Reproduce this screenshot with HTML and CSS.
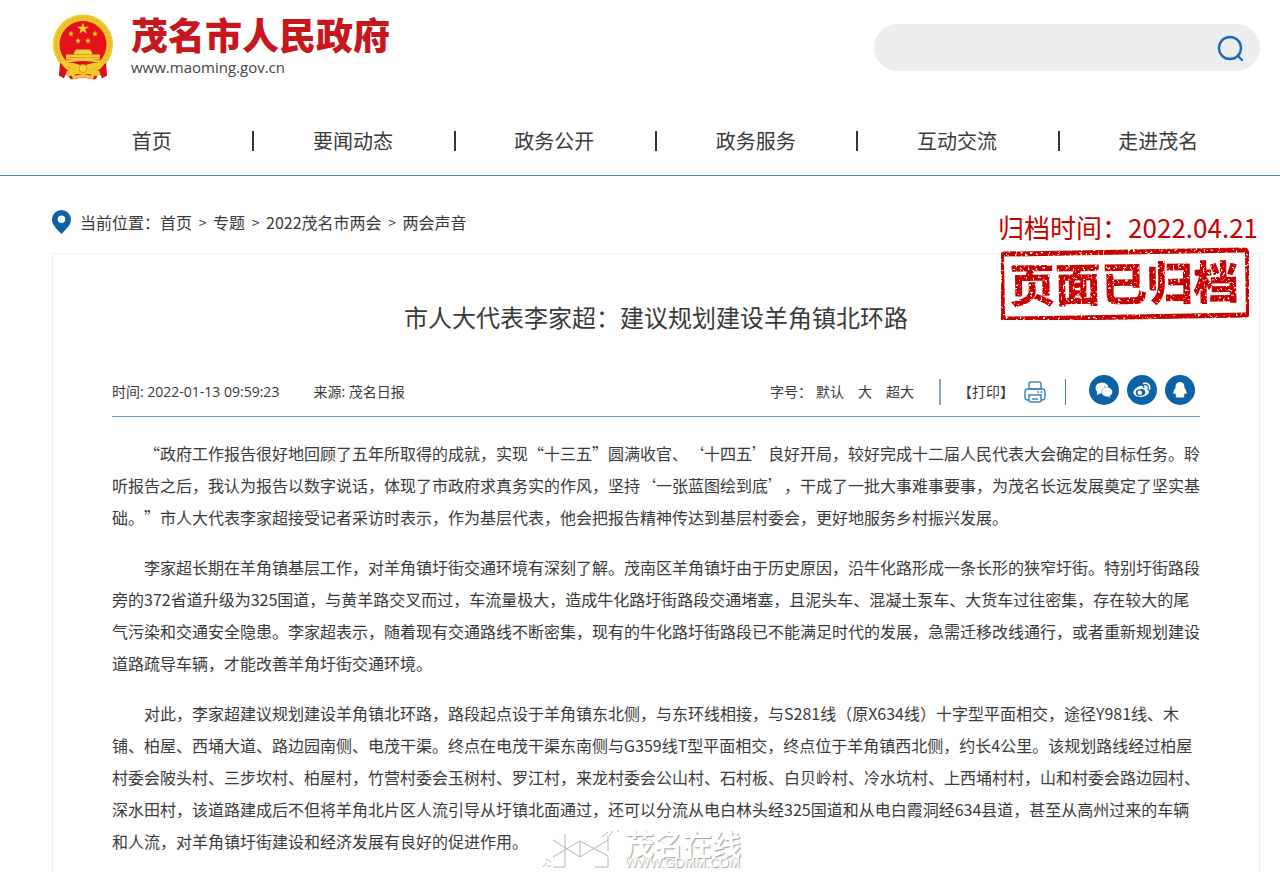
FILE: index.html
```html
<!DOCTYPE html>
<html lang="zh-CN">
<head>
    <meta charset="UTF-8">
    <meta name="viewport" content="width=device-width, initial-scale=1.0">
    <title>市人大代表李家超：建议规划建设羊角镇北环路</title>
    <link rel="stylesheet" href="styles.css">
</head>
<body>
    <header class="header">
        <a class="logo" href="#">
            <svg class="emblem" viewBox="0 0 62 66" aria-hidden="true">
                <path d="M11 46 L7 61 L15 60 L19 65 L31 63 L43 65 L47 60 L55 61 L51 46 Z" fill="#d3131b"/>
                <circle cx="31" cy="30" r="30" fill="#f3c62c"/>
                <circle cx="31" cy="30" r="27" fill="none" stroke="#e0a820" stroke-width="1" stroke-dasharray="3 2"/>
                <circle cx="31" cy="30" r="23.500" fill="#e4131b"/>
                <path d="M31 8 L32.4 12.3 L37 12.3 L33.3 15 L34.7 19.3 L31 16.6 L27.3 19.3 L28.7 15 L25 12.3 L29.6 12.3 Z" fill="#fbd12f"/>
                <g fill="#fbd12f">
                    <path id="star" d="M19 16 L19.8 18.2 L22 18.3 L20.2 19.7 L20.8 22 L19 20.7 L17.2 22 L17.8 19.7 L16 18.3 L18.2 18.2 Z"/>
                    <use href="#star" x="24"/>
                    <use href="#star" x="7" y="7"/>
                    <use href="#star" x="17" y="7"/>
                </g>
                <path d="M24 35 H38 L40 38 V40 H48 V45 H14 V40 H22 V38 Z" fill="#f8d238"/>
                <path d="M22 40 H40 M14 43 H48" stroke="#dba01f" stroke-width="1"/>
                <path d="M9 47 Q31 41 53 47 L50 52 Q41 51 36 54 L50 57 L46 62 L31 58 L16 62 L12 57 L26 54 Q21 51 12 52 Z" fill="#f5c92d"/>
                <path d="M15 48 Q31 45 47 48 Q38 48 31 52 Q24 48 15 48 Z" fill="#d3131b"/>
                <circle cx="31" cy="54" r="4" fill="#f8d238" stroke="#d99a1c"/>
                <path d="M8 48 L15 56 L12 64 L7 61 Z M54 48 L47 56 L50 64 L55 61 Z" fill="#d3131b"/>
                <path d="M20 58 L22 63 L31 61 L40 63 L42 58" fill="none" stroke="#f5c92d" stroke-width="3"/>
            </svg>
            <span class="logo-text">
                <strong class="site-name">茂名市人民政府</strong>
                <span class="site-url">www.maoming.gov.cn</span>
            </span>
        </a>
        <form class="search">
            <input type="text" aria-label="搜索">
            <button type="submit" aria-label="搜索">
                <svg width="28" height="28" viewBox="0 0 28 28" fill="none" stroke="#1a6cb0" stroke-width="2.400" stroke-linecap="round">
                    <circle cx="14" cy="14" r="11"/>
                    <path d="M22 22 L26 26"/>
                </svg>
            </button>
        </form>
    </header>

    <nav class="nav">
        <a href="#">首页</a>
        <a href="#">要闻动态</a>
        <a href="#">政务公开</a>
        <a href="#">政务服务</a>
        <a href="#">互动交流</a>
        <a href="#">走进茂名</a>
    </nav>

    <main class="main">
        <div class="crumbs">
            <svg class="pin" width="19" height="24" viewBox="0 0 19 24" aria-hidden="true">
                <path d="M9.500 0 A9.500 9.500 0 0 0 0 9.500 C0 15 5 19 9.500 24 C14 19 19 15 19 9.500 A9.500 9.500 0 0 0 9.500 0 Z M9.500 5.500 A3.700 3.700 0 1 1 9.500 13 A3.700 3.700 0 1 1 9.500 5.500 Z" fill="#0c62a6"/>
            </svg>
            <span>当前位置：</span>
            <a href="#">首页</a><span class="sep">&gt;</span>
            <a href="#">专题</a><span class="sep">&gt;</span>
            <a href="#">2022茂名市两会</a><span class="sep">&gt;</span>
            <a href="#">两会声音</a>
        </div>

        <!-- archive mark -->
        <div class="archive">
            <p>归档时间：2022.04.21</p>
            <svg class="stamp" width="254" height="76" viewBox="0 0 254 76" role="img" aria-label="页面已归档">
                <filter id="worn" x="0" y="0" width="100%" height="100%">
                    <feTurbulence type="fractalNoise" baseFrequency="0.4" numOctaves="2" seed="4"/>
                    <feColorMatrix values="0 0 0 0 0  0 0 0 0 0  0 0 0 0 0  0 0 0 -8 5.800"/>
                    <feComposite in="SourceGraphic" operator="in"/>
                </filter>
                <g filter="url(#worn)">
                    <g transform="rotate(-1 127 38)">
                        <rect x="4" y="5" width="246" height="65" rx="3" fill="none" stroke="#c70000" stroke-width="5"/>
                        <text class="stamp-text" x="126" y="54" text-anchor="middle">页面已归档</text>
                    </g>
                </g>
            </svg>
        </div>

        <article class="article">
            <h1>市人大代表李家超：建议规划建设羊角镇北环路</h1>

            <div class="meta">
                <span class="time">时间: 2022-01-13 09:59:23</span>
                <span class="source">来源: 茂名日报</span>
                <div class="sizes">
                    <span>字号：</span>
                    <button type="button">默认</button>
                    <button type="button">大</button>
                    <button type="button">超大</button>
                </div>
                <button type="button" class="print">【打印】
                    <svg width="22" height="22" viewBox="0 0 22 22" fill="none" stroke="#3f86bd" stroke-width="1.500" aria-hidden="true">
                        <path d="M5 8 V3 Q5 1 7 1 H15 Q17 1 17 3 V8 Z"/>
                        <path d="M5 19 H4 Q1 19 1 16 V11 Q1 8 4 8 H18 Q21 8 21 11 V16 Q21 19 18 19 H17"/>
                        <path d="M5 14 H17 V19 Q17 21 15 21 H7 Q5 21 5 19 Z"/>
                        <path d="M8 18 H14 M13 11 H15 M16.500 11 H18.500"/>
                    </svg>
                </button>
                <div class="share">
                    <a href="#" aria-label="微信">
                        <svg width="30" height="30" viewBox="0 0 30 30">
                            <ellipse cx="13" cy="13" rx="6.500" ry="5.500" fill="#fff"/>
                            <path d="M8 17 L8 20 L12 18 Z M20 20 L21.500 23 L17 21 Z" fill="#fff"/>
                            <ellipse cx="18" cy="17" rx="5.500" ry="4.700" fill="#fff" stroke="#0c62a6" stroke-width="0.400"/>
                            <path d="M10.500 11.500 h1 M15 11.500 h1 M15.700 16 h1 M19.500 16 h1" stroke="#6fa3cc" stroke-width="1"/>
                        </svg>
                    </a>
                    <a href="#" aria-label="微博">
                        <svg width="30" height="30" viewBox="0 0 30 30">
                            <path d="M13 11 C9 12 6 15.500 6.500 18 C7 21 11 22 14 22 C19 21.500 22 19 22 17 C22 15.500 21 15 20 14.500 C20.500 12.500 19 11.500 16 13 C16 11 15 10.500 13 11 Z" fill="#fff"/>
                            <ellipse cx="13.500" cy="17.500" rx="4.800" ry="3.300" fill="#0c62a6" transform="rotate(-10 13.500 17.500)"/>
                            <circle cx="12.800" cy="17.800" r="2.300" fill="#fff"/>
                            <path d="M16.500 8.500 C20.500 7.500 23.500 10 22.500 14 M17.500 11.200 C19.500 11 20.500 12 20 13.500" fill="none" stroke="#fff" stroke-width="1.600" stroke-linecap="round"/>
                        </svg>
                    </a>
                    <a href="#" aria-label="QQ">
                        <svg width="30" height="30" viewBox="0 0 30 30">
                            <path d="M15 7 C11.500 7 10.500 9.500 10.500 13 C8.500 15.500 8 17.500 8.500 19 C9 19.500 9.700 18.500 10 18 C10.300 19.300 10.800 20 11.500 20.700 C10 21.300 10.300 22.500 12 22.500 H18 C19.700 22.500 20 21.300 18.500 20.700 C19.200 20 19.700 19.300 20 18 C20.300 18.500 21 19.500 21.500 19 C22 17.500 21.500 15.500 19.500 13 C19.500 9.500 18.500 7 15 7 Z" fill="#fff"/>
                        </svg>
                    </a>
                </div>
            </div>

            <div class="content">
                <p>“政府工作报告很好地回顾了五年所取得的成就，实现“十三五”圆满收官、‘十四五’良好开局，较好完成十二届人民代表大会确定的目标任务。聆<br>听报告之后，我认为报告以数字说话，体现了市政府求真务实的作风，坚持‘一张蓝图绘到底’，干成了一批大事难事要事，为茂名长远发展奠定了坚实基<br>础。”市人大代表李家超接受记者采访时表示，作为基层代表，他会把报告精神传达到基层村委会，更好地服务乡村振兴发展。</p>
                <p>李家超长期在羊角镇基层工作，对羊角镇圩街交通环境有深刻了解。茂南区羊角镇圩由于历史原因，沿牛化路形成一条长形的狭窄圩街。特别圩街路段<br>旁的372省道升级为325国道，与黄羊路交叉而过，车流量极大，造成牛化路圩街路段交通堵塞，且泥头车、混凝土泵车、大货车过往密集，存在较大的尾<br>气污染和交通安全隐患。李家超表示，随着现有交通路线不断密集，现有的牛化路圩街路段已不能满足时代的发展，急需迁移改线通行，或者重新规划建设<br>道路疏导车辆，才能改善羊角圩街交通环境。</p>
                <p>对此，李家超建议规划建设羊角镇北环路，路段起点设于羊角镇东北侧，与东环线相接，与S281线（原X634线）十字型平面相交，途径Y981线、木<br>铺、柏屋、西埇大道、路边园南侧、电茂干渠。终点在电茂干渠东南侧与G359线T型平面相交，终点位于羊角镇西北侧，约长4公里。该规划路线经过柏屋<br>村委会陂头村、三步坎村、柏屋村，竹营村委会玉树村、罗江村，来龙村委会公山村、石村板、白贝岭村、冷水坑村、上西埇村村，山和村委会路边园村、<br>深水田村，该道路建成后不但将羊角北片区人流引导从圩镇北面通过，还可以分流从电白林头经325国道和从电白霞洞经634县道，甚至从高州过来的车辆<br>和人流，对羊角镇圩街建设和经济发展有良好的促进作用。</p>
            </div>

            <div class="watermark">
                <svg width="78" height="40" viewBox="0 0 78 40" fill="none" stroke="#b4b4b4" aria-hidden="true">
                    <path d="M11 10 L38 27 L66 10 M11 27 L38 11 L66 26 M23 4 V37 H11 M38 11 V27 M66 6 V21 M66 27 V37 H53"/>
                    <path d="M60 7 L66 2 M67 6 L71 1 M1 37 L5 33 M4 29 L9 32 M5 36 H9 M75 1 H77"/>
                </svg>
                <span class="wm-text">
                    <b>茂名在线</b>
                    <span>WWW.GDMM.COM</span>
                </span>
            </div>
        </article>
    </main>
</body>
</html>
```

FILE: styles.css
```css
* { box-sizing: border-box; }
body { font-family: "Noto Sans CJK SC", sans-serif; background-color: #fff; color: #3a3a3a; margin: 0; font-size: 16px; text-spacing-trim: space-all; }
a { color: inherit; text-decoration: none; }
h1, p { margin: 0; font-weight: normal; }
button { font: inherit; color: inherit; background: none; border: none; padding: 0; cursor: pointer; }
svg { display: block; flex: none; }

/* Header */
.header { display: flex; justify-content: space-between; align-items: center; padding: 14px 20px 26px 52px; }
.logo { display: flex; gap: 17px; }
.emblem { width: 62px; height: 67px; }
.logo-text { display: flex; flex-direction: column; }
.site-name { font-size: 37px; line-height: 40px; font-weight: 900; color: #c8161d; }
.site-url { font-family: "Open Sans", sans-serif; font-size: 15px; line-height: 27px; color: #444; }
.search { display: flex; align-items: center; width: 386px; height: 47px; padding: 0 16px 0 24px; background-color: #ededed; border-radius: 24px; }
.search input { flex: 1; min-width: 0; height: 40px; border: none; outline: none; background: none; font: inherit; }

/* Navigation */
.nav { display: flex; padding: 0 21px 0 51px; border-bottom: 1px solid #3f86c4; }
.nav a { flex: 1; position: relative; text-align: center; font-size: 20px; line-height: 68px; }
.nav a + a::before { content: ""; position: absolute; left: 0; top: 24px; width: 2px; height: 20px; background-color: #333; }

.main { position: relative; padding: 0 20px 0 52px; }
.crumbs { display: flex; align-items: center; padding-top: 14px; height: 77px; }
.pin { margin-right: 9px; }
.sep { width: 21px; text-align: center; font-size: 14px; }

/* Archive mark */
.archive { position: absolute; top: 31px; right: 20px; z-index: 1; color: #c70000; }
.archive p { font-size: 26px; line-height: 40px; padding-right: 2px; }
.stamp-text { font-size: 46px; font-weight: 900; fill: #c70000; }

/* Article */
.article { position: relative; border: 1px solid #f0f0f0; border-bottom: none; padding: 45px 59px 15px; }
.article h1 { font-size: 24px; line-height: 36px; text-align: center; }
.meta { display: flex; align-items: flex-end; margin-top: 40px; padding: 0 5px 11px 0; border-bottom: 1px solid #5b9bcb; font-family: "Open Sans", "Noto Sans CJK SC", sans-serif; font-size: 14px; line-height: 26px; }
.source { margin-left: 34px; }
.sizes { display: flex; gap: 14px; margin-left: auto; padding-right: 25px; border-right: 2px solid #7fabd0; }
.sizes span { margin-right: -10px; }
.print { display: flex; align-items: center; gap: 10px; padding: 0 19px 0 17px; border-right: 1px solid #3f7fb4; }
.share { display: flex; gap: 8px; margin-left: 23px; }
.share a { width: 30px; height: 30px; border-radius: 50%; background-color: #0c62a6; }

.content { margin-top: 20px; line-height: 32px; }
.content p { text-indent: 2em; }
.content p + p { margin-top: 18px; }

.watermark { position: absolute; left: calc(50% - 114px); bottom: 2px; display: flex; gap: 5px; color: #fff; text-shadow: 1px 1px 1px #999; }
.wm-text { display: flex; flex-direction: column; }
.wm-text b { font-size: 29px; line-height: 26px; }
.wm-text span { font-family: "Liberation Sans", sans-serif; font-size: 13px; line-height: 14px; }
```
